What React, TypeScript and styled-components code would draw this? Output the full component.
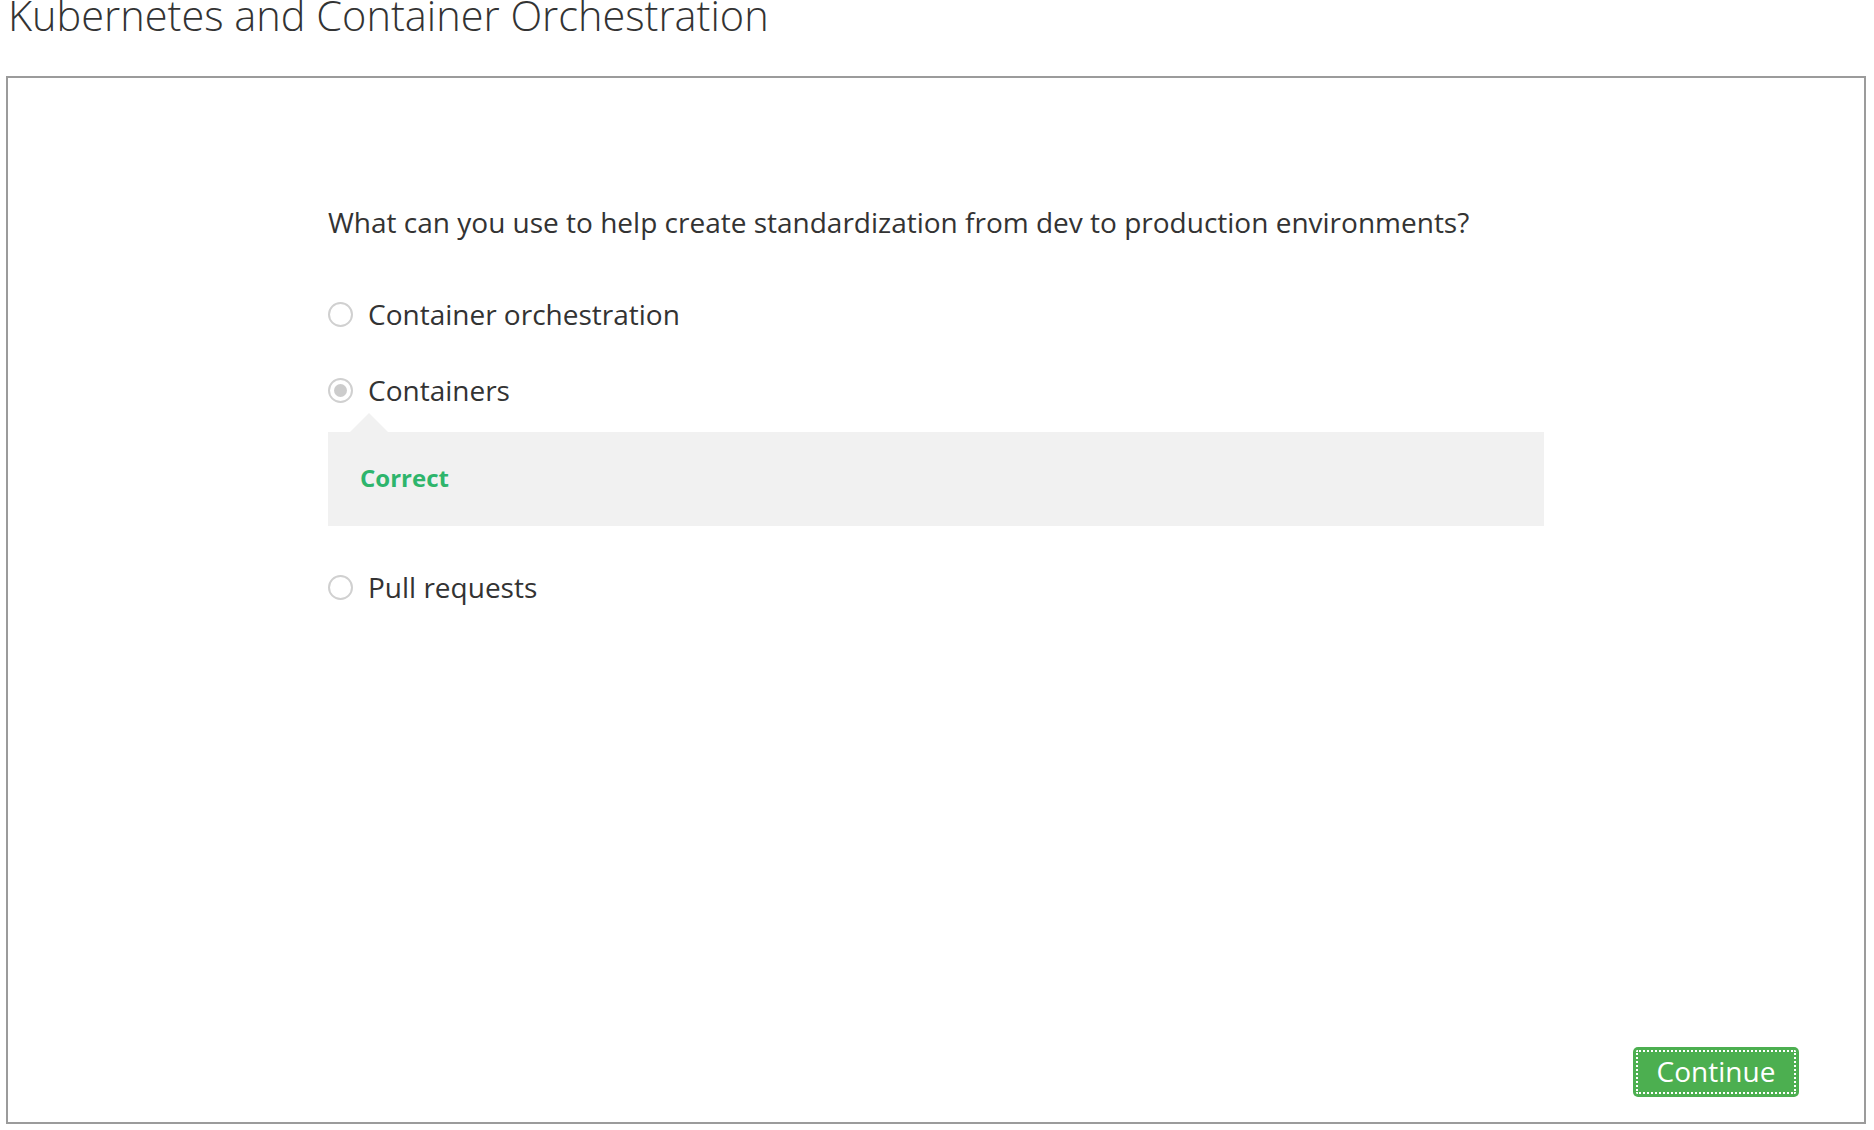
import React from "react";
import styled, { createGlobalStyle } from "styled-components";

const Global = createGlobalStyle`
  html, body { margin: 0; padding: 0; background: #ffffff; }
  body { font-family: "Open Sans", "Liberation Sans", sans-serif; color: #333333; }
  * { box-sizing: border-box; }
`;

const Page = styled.div`
  padding: 0 8px 6px 6px;
  display: flex;
  flex-direction: column;
`;

const Title = styled.h1`
  margin: 0 0 46px 2px;
  font-family: "Open Sans", sans-serif;
  font-weight: 300;
  font-size: 41.5px;
  line-height: 30px;
  color: #333333;
  white-space: nowrap;
`;

const Frame = styled.section`
  height: 1048px;
  border: 2px solid #9b9b9b;
  display: flex;
  flex-direction: column;
  align-items: center;
  padding: 126px 0 25px;
`;

const Content = styled.div`
  width: 1216px;
  display: flex;
  flex-direction: column;
`;

const Question = styled.p`
  margin: 0 0 56px;
  font-size: 28px;
  line-height: 36px;
  color: #333333;
`;

const Option = styled.label<{ $gap: number }>`
  display: flex;
  align-items: center;
  height: 36px;
  margin-bottom: ${(p) => p.$gap}px;
  font-size: 28px;
  color: #333333;
  cursor: pointer;
`;

const Radio = styled.span<{ $checked?: boolean }>`
  flex: none;
  width: 25px;
  height: 25px;
  margin-right: 15px;
  border-radius: 50%;
  border: 2px solid #d0d0d0;
  display: flex;
  align-items: center;
  justify-content: center;
  &::after {
    content: "";
    width: 13px;
    height: 13px;
    border-radius: 50%;
    background: #cccccc;
    display: ${(p) => (p.$checked ? "block" : "none")};
  }
`;

const Feedback = styled.div`
  position: relative;
  height: 94px;
  margin-bottom: 43px;
  background: #f1f1f1;
  padding: 0 32px 4px;
  display: flex;
  align-items: center;
  &::before {
    content: "";
    position: absolute;
    top: -19px;
    left: 22px;
    border-left: 19px solid transparent;
    border-right: 19px solid transparent;
    border-bottom: 19px solid #f1f1f1;
  }
`;

const Verdict = styled.span`
  font-weight: 700;
  font-size: 24px;
  color: #2eb56c;
`;

const Footer = styled.div`
  margin-top: auto;
  align-self: stretch;
  display: flex;
  justify-content: flex-end;
  padding-right: 65px;
`;

const ContinueButton = styled.button`
  width: 166px;
  height: 50px;
  border: none;
  border-radius: 5px;
  background: #4caf50;
  color: #ffffff;
  font-family: "Open Sans", sans-serif;
  font-size: 28px;
  line-height: 1;
  outline: 2px dotted #ffffff;
  outline-offset: -5px;
  cursor: pointer;
  padding: 0 0 2px;
`;

export default function App() {
  return (
    <>
      <Global />
      <Page>
        <Title>Kubernetes and Container Orchestration</Title>
        <Frame>
          <Content>
            <Question>
              What can you use to help create standardization from dev to production environments?
            </Question>
            <Option $gap={40}>
              <Radio />
              Container orchestration
            </Option>
            <Option $gap={24}>
              <Radio $checked />
              Containers
            </Option>
            <Feedback>
              <Verdict>Correct</Verdict>
            </Feedback>
            <Option $gap={0}>
              <Radio />
              Pull requests
            </Option>
          </Content>
          <Footer>
            <ContinueButton>Continue</ContinueButton>
          </Footer>
        </Frame>
      </Page>
    </>
  );
}
